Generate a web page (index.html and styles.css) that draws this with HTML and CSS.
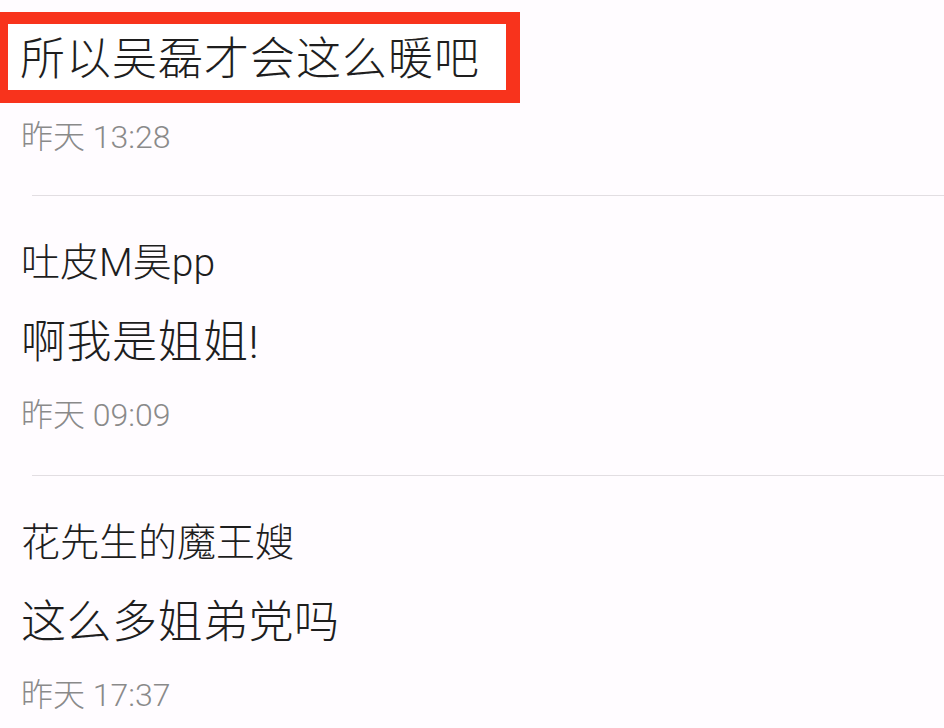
FILE: index.html
```html
<!DOCTYPE html>
<html lang="zh-CN">
<head>
<meta charset="utf-8">
<link rel="stylesheet" href="styles.css">
</head>
<body>
<div class="page">
  <div class="comment first">
    <div class="highlight"><span class="body-text">所以吴磊才会这么暖吧</span></div>
    <div class="time">昨天 13:28</div>
  </div>
  <div class="sep"></div>
  <div class="comment">
    <div class="user">吐皮M昊pp</div>
    <div class="body-text">啊我是姐姐!</div>
    <div class="time">昨天 09:09</div>
  </div>
  <div class="sep"></div>
  <div class="comment">
    <div class="user">花先生的魔王嫂</div>
    <div class="body-text">这么多姐弟党吗</div>
    <div class="time">昨天 17:37</div>
  </div>
</div>
</body>
</html>
```
FILE: styles.css
```css
html, body {
  margin: 0;
  padding: 0;
  background: #fffcff;
}
body {
  font-family: Roboto, "Noto Sans CJK SC", sans-serif;
  color: #222;
  width: 944px;
  height: 728px;
  overflow: hidden;
}
.page {
  display: flex;
  flex-direction: column;
}
.comment {
  display: flex;
  flex-direction: column;
  padding-left: 21px;
}
.comment.first {
  padding-left: 0;
  padding-top: 12px;
}
.highlight {
  height: 66px;
  border: 12px solid #f8331c;
  border-left-width: 8px;
  border-right-width: 14px;
  border-bottom-width: 13px;
  background: #fff;
  display: flex;
  align-items: center;
  padding-left: 12px;
  box-sizing: content-box;
  width: 486px;
}
.highlight .body-text {
  line-height: 66px;
  letter-spacing: 1px;
}
.body-text {
  font-size: 45px;
  line-height: 60px;
  height: 60px;
  font-weight: 300;
  color: #1e1e1e;
  letter-spacing: 0.5px;
}
.user {
  font-size: 39px;
  line-height: 50px;
  height: 50px;
  font-weight: 300;
  color: #1e1e1e;
  margin-top: 42px;
  margin-bottom: 25px;
}
.time {
  font-size: 32px;
  line-height: 40px;
  height: 40px;
  color: #8a8a8a;
  font-weight: 300;
  margin-top: 22px;
  margin-bottom: 40px;
}
.first .time {
  margin-top: 14px;
  margin-left: 21px;
  margin-bottom: 38px;
}
.sep {
  height: 1px;
  background: #e2dee2;
  margin-left: 32px;
}
```
